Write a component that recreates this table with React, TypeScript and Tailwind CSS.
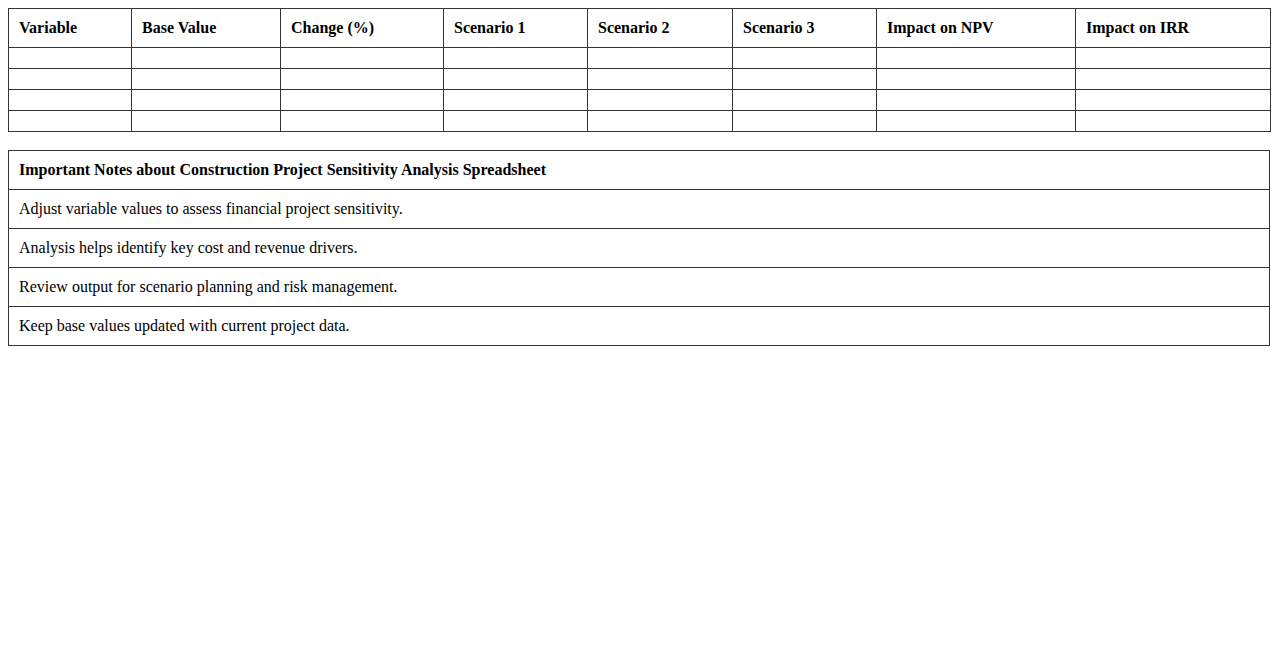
const columns = [
  { label: "Variable", width: "w-[123px]" },
  { label: "Base Value", width: "w-[149px]" },
  { label: "Change (%)", width: "w-[163px]" },
  { label: "Scenario 1", width: "w-[144px]" },
  { label: "Scenario 2", width: "w-[145px]" },
  { label: "Scenario 3", width: "w-[144px]" },
  { label: "Impact on NPV", width: "w-[199px]" },
  { label: "Impact on IRR", width: "w-[195px]" },
];

const notes = [
  "Adjust variable values to assess financial project sensitivity.",
  "Analysis helps identify key cost and revenue drivers.",
  "Review output for scenario planning and risk management.",
  "Keep base values updated with current project data.",
];

export default function App() {
  return (
    <div className="min-h-screen bg-white p-2 font-['Liberation_Serif','Times_New_Roman',serif] text-base leading-[normal] text-black">
      <table className="w-full table-fixed border-collapse">
        <colgroup>
          {columns.map((col) => (
            <col key={col.label} className={col.width} />
          ))}
        </colgroup>
        <thead>
          <tr>
            {columns.map((col) => (
              <th
                key={col.label}
                className="border border-[#333] p-[10px] text-left font-bold"
              >
                {col.label}
              </th>
            ))}
          </tr>
        </thead>
        <tbody>
          {[0, 1, 2, 3].map((row) => (
            <tr key={row}>
              {columns.map((col) => (
                <td key={col.label} className="border border-[#333] p-[10px]"></td>
              ))}
            </tr>
          ))}
        </tbody>
      </table>

      <table className="mt-[18px] w-full border-collapse">
        <tbody>
          <tr>
            <th className="border border-[#333] p-[10px] text-left font-bold">
              Important Notes about Construction Project Sensitivity Analysis Spreadsheet
            </th>
          </tr>
          {notes.map((note) => (
            <tr key={note}>
              <td className="border border-[#333] p-[10px]">{note}</td>
            </tr>
          ))}
        </tbody>
      </table>
    </div>
  );
}
